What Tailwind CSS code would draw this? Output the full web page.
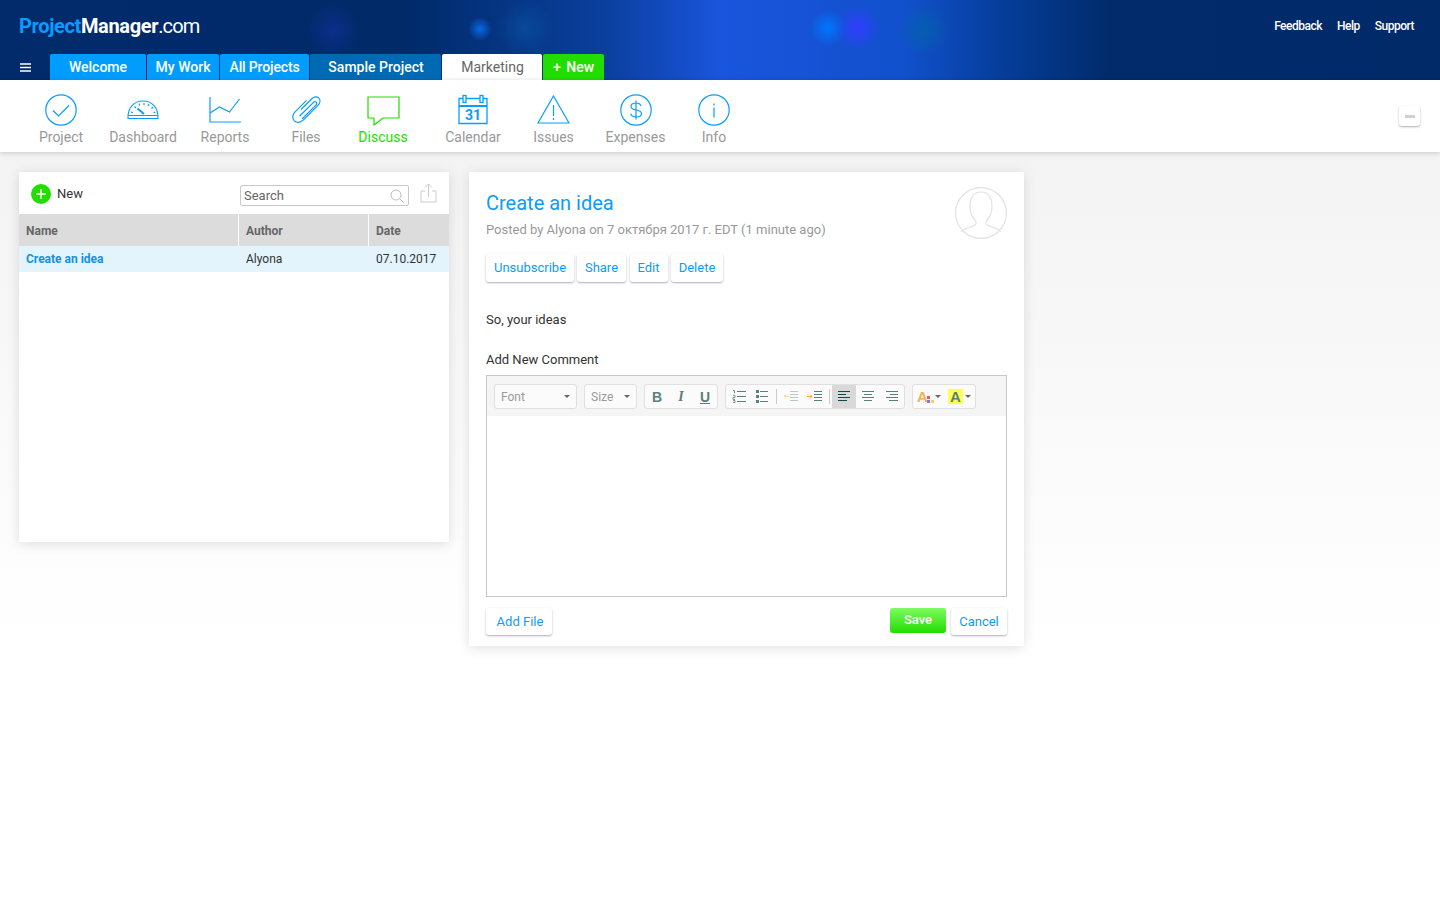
<!DOCTYPE html>
<html lang="en">
<head>
  <meta charset="utf-8" />
  <meta name="viewport" content="width=device-width, initial-scale=1" />
  <title>ProjectManager.com</title>
  <script src="https://cdn.jsdelivr.net/npm/@tailwindcss/browser@4"></script>
</head>
<body class="min-h-[900px] bg-[linear-gradient(180deg,#f3f3f3_0px,#f3f3f3_150px,#ffffff_640px)] font-['Roboto',sans-serif] text-[#333]">

  <!-- Top bar -->
  <header class="relative h-20 overflow-hidden bg-[linear-gradient(90deg,#012b6b_0%,#002a68_28%,#0a3f9d_42%,#1a55dd_50%,#1150cc_63%,#063f9e_69%,#012b6b_77%,#002a68_100%)]">
    <!-- glows -->
    <div class="absolute left-[305px] top-[2px] h-14 w-14 rounded-full bg-[radial-gradient(circle,rgba(30,50,190,.4),rgba(30,50,190,0)_70%)]"></div>
    <div class="absolute left-[468px] top-[17px] h-6 w-6 rounded-full bg-[radial-gradient(circle,rgba(10,110,240,.9),rgba(10,110,240,0)_70%)]"></div>
    <div class="absolute left-[495px] top-0 h-14 w-[60px] rounded-full bg-[radial-gradient(circle,rgba(10,90,170,.5),rgba(10,90,170,0)_70%)]"></div>
    <div class="absolute left-[810px] top-[10px] h-9 w-9 rounded-full bg-[radial-gradient(circle,rgba(0,120,255,.95),rgba(0,120,255,0)_72%)]"></div>
    <div class="absolute left-[836px] top-[6px] h-11 w-11 rounded-full bg-[radial-gradient(circle,rgba(50,60,255,.95),rgba(50,60,255,0)_72%)]"></div>
    <div class="absolute left-[898px] top-[6px] h-12 w-[52px] rounded-full bg-[radial-gradient(circle,rgba(0,100,170,.75),rgba(0,100,170,0)_75%)]"></div>

    <div class="relative flex h-[54px] items-start justify-between pl-[19px] pr-[26px]">
      <div class="mt-[14px] text-[20px] leading-6 tracking-[-0.35px]"><span class="font-bold text-[#0a9cff]">Project</span><span class="font-bold text-white">Manager</span><span class="tracking-[-0.9px] text-white">.com</span></div>
      <div class="mt-[19px] flex gap-[15px] text-xs font-medium leading-[14px] tracking-[-0.5px] text-white">
        <span>Feedback</span><span>Help</span><span>Support</span>
      </div>
    </div>

    <nav class="relative flex h-[26px] items-stretch text-sm font-medium leading-[26px] text-white">
      <div class="flex w-[50px] items-center pl-[20px]">
        <svg width="11" height="9" viewBox="0 0 11 9" fill="none" stroke="#fff" stroke-width="1.4"><path d="M0 1h11M0 4.5h11M0 8h11"/></svg>
      </div>
      <div class="w-[96px] rounded-t-[2px] bg-[#009dff] text-center">Welcome</div>
      <div class="ml-px w-[72px] rounded-t-[2px] bg-[#009dff] text-center">My Work</div>
      <div class="ml-px w-[89px] rounded-t-[2px] bg-[#009dff] text-center tracking-[-0.15px]">All Projects</div>
      <div class="ml-px w-[131px] rounded-t-[2px] bg-[#0069b4] pl-px text-center">Sample Project</div>
      <div class="ml-px w-[100px] rounded-t-[2px] bg-white pl-px text-center font-normal text-[#666]">Marketing</div>
      <div class="ml-px w-[61px] rounded-t-[2px] bg-[#22dd00] text-center [word-spacing:2px]">+ New</div>
    </nav>
  </header>

  <!-- Section toolbar -->
  <div class="relative flex h-[72px] bg-white pl-5 pr-5 shadow-[0_1px_5px_rgba(0,0,0,.18)]">
    <div class="flex text-sm leading-4 text-[#999]">
      <div class="flex w-[82px] flex-col items-center pt-[14px]">
        <svg width="32" height="32" viewBox="0 0 32 32" fill="none" stroke="#0a9cff" stroke-width="1.2"><circle cx="16" cy="16" r="15.200"/><path d="M8 16.500l5.500 5.500L24 11.500"/></svg>
        <span class="mt-[3px]">Project</span>
      </div>
      <div class="flex w-[82px] flex-col items-center pt-[14px]">
        <svg width="32" height="32" viewBox="0 0 32 32" fill="none" stroke="#0a9cff" stroke-width="1.1"><path d="M1 24.500C.6 13.500 7 7 16 7s15.400 6.500 15 17.500z"/><path d="M1.200 21.500h29.600M4 18l2 .8M7.500 12.500l1.500 1.500M12 9.500l.8 2M17 9v2.200M22 10l-1 2M26 13l-1.500 1.500M28.500 18l-2 .8"/><path d="M10.500 14.500l6.500 5.500" stroke-width="2"/></svg>
        <span class="mt-[3px]">Dashboard</span>
      </div>
      <div class="flex w-[82px] flex-col items-center pt-[14px]">
        <svg width="32" height="32" viewBox="0 0 32 32" fill="none" stroke="#0a9cff" stroke-width="1.2"><path d="M1 3v25h31"/><path d="M1 19l9.500-6 10 5 10-13"/></svg>
        <span class="mt-[3px]">Reports</span>
      </div>
      <div class="flex w-[80px] flex-col items-center pt-[14px]">
        <svg width="32" height="32" viewBox="0 0 32 32" fill="none" stroke="#0a9cff" stroke-width="1.2"><path d="M11 15.500L21.500 5c2.500-2.500 5.500-2.700 7.300-.9s1.600 4.800-.9 7.300L13.500 25.800c-3 3-6.900 3.300-9.200 1s-2-6.200 1-9.200L16.500 6.400"/><path d="M9.500 22.300l13.800-13.700c1-1 2.300-1.100 3-.4s.6 2-.4 3L12 25"/></svg>
        <span class="mt-[3px]">Files</span>
      </div>
      <div class="flex w-[74px] flex-col items-center pt-[14px] text-[#22dd00]">
        <svg width="33" height="32" viewBox="0 0 33 32" fill="none" stroke="#22dd00" stroke-width="1.2"><path d="M1 3h31v21H16l-9 7v-7H1z"/></svg>
        <span class="mt-[3px]">Discuss</span>
      </div>
      <div class="flex w-[106px] flex-col items-center pt-[14px]">
        <svg width="30" height="32" viewBox="0 0 30 32" fill="none" stroke="#0a9cff" stroke-width="1.300"><path d="M1 4.500h28v25H1z"/><path d="M1 12h28" stroke-width="2"/><rect x="5" y="1.500" width="3" height="7" fill="#fff"/><rect x="22" y="1.500" width="3" height="7" fill="#fff"/><text x="15" y="26" text-anchor="middle" font-family="Roboto, sans-serif" font-size="14" font-weight="700" fill="#0a9cff" stroke="none">31</text></svg>
        <span class="mt-[3px]">Calendar</span>
      </div>
      <div class="flex w-[55px] flex-col items-center pt-[14px]">
        <svg width="33" height="32" viewBox="0 0 33 32" fill="none" stroke="#0a9cff" stroke-width="1.2"><path d="M16.500 2L32 29H1z"/><path d="M16.500 11v11M16.500 24v2"/></svg>
        <span class="mt-[3px]">Issues</span>
      </div>
      <div class="flex w-[109px] flex-col items-center pt-[14px]">
        <svg width="32" height="32" viewBox="0 0 32 32" fill="none" stroke="#0a9cff" stroke-width="1.200"><circle cx="16" cy="16" r="15.200"/><path d="M21 12c-.5-1.800-2.300-3-5-3-2.800 0-5 1.400-5 3.500 0 5 10.500 2 10.500 7 0 2.200-2.300 3.500-5.300 3.500s-5-1.300-5.500-3.300M16 6.500v19"/></svg>
        <span class="mt-[3px]">Expenses</span>
      </div>
      <div class="flex w-[48px] flex-col items-center pt-[14px]">
        <svg width="32" height="32" viewBox="0 0 32 32" fill="none" stroke="#0a9cff" stroke-width="1.200"><circle cx="16" cy="16" r="15.200"/><path d="M16 13.500v10M16 9.500v2"/></svg>
        <span class="mt-[3px]">Info</span>
      </div>
    </div>
    <div class="ml-auto mt-[26px] flex h-5 w-[21px] items-center justify-center rounded-[3px] bg-white shadow-[0_1px_2px_rgba(70,70,120,.45)]">
      <div class="h-[3px] w-[10px] bg-[#d0d0d0]"></div>
    </div>
  </div>

  <!-- Content -->
  <main class="flex items-start gap-5 pl-[19px] pt-5">

    <!-- Discussion list -->
    <section class="h-[370px] w-[430px] bg-white shadow-[0_2px_12px_rgba(0,0,0,.12)]">
      <div class="flex h-[42px] items-center pl-3">
        <svg class="mt-[2px]" width="20" height="20" viewBox="0 0 20 20"><circle cx="10" cy="10" r="10" fill="#22dd00"/><path d="M10 5v10M5 10h10" stroke="#fff" stroke-width="1.500"/></svg>
        <span class="ml-[6px] mt-[2px] text-[13px] text-[#333]">New</span>
        <div class="ml-auto mt-[5px] flex h-[21px] w-[169px] items-center justify-between rounded-[2px] border border-[#c8c8c8] pl-[3px] pr-[4px] text-[13px] text-[#666]">
          <span>Search</span>
          <svg width="14" height="14" viewBox="0 0 14 14" fill="none" stroke="#bbb"><circle cx="6" cy="6" r="5"/><path d="M9.700 9.700L13.500 13.500"/></svg>
        </div>
        <svg class="ml-[11px] mr-3" width="17" height="20" viewBox="0 0 17 20" fill="none" stroke="#ccc"><path d="M5 8H1v11h15V8h-4M8.500 14V1M5 4.500L8.500 1 12 4.500"/></svg>
      </div>
      <div class="flex h-8 bg-[#dcdcdc] text-xs font-bold leading-[34px] text-[#666]">
        <div class="w-[220px] border-r border-white pl-[7px]">Name</div>
        <div class="w-[130px] border-r border-white pl-[7px]">Author</div>
        <div class="pl-[7px]">Date</div>
      </div>
      <div class="flex h-[26px] bg-[#e3f4fd] text-xs leading-[26px] text-[#333]">
        <div class="w-[220px] pl-[7px] font-bold text-[#1490e6]">Create an idea</div>
        <div class="w-[130px] pl-[7px]">Alyona</div>
        <div class="pl-[7px]">07.10.2017</div>
      </div>
    </section>

    <!-- Discussion detail -->
    <section class="relative h-[474px] w-[555px] bg-white px-[17px] shadow-[0_2px_12px_rgba(0,0,0,.12)]">
      <svg class="absolute right-[17px] top-[15px]" width="52" height="52" viewBox="0 0 52 52" fill="none" stroke="#e2e2e2" stroke-width="1.200"><circle cx="26" cy="26" r="25.400"/><path d="M6 45c3-4 11-5 14-7 1.500-1 1.500-3 0-5-3-3-5-7-5-13 0-10 4-15 11-15s11 5 11 15c0 6-2 10-5 13-1.500 2-1.500 4 0 5 3 2 11 3 14 7"/></svg>
      <h1 class="pt-[17px] text-[20px] leading-[28px] text-[#0a9cff]">Create an idea</h1>
      <p class="mt-[3px] text-[13px] leading-[20px] text-[#999]">Posted by Alyona on 7 октября 2017 г. EDT (1 minute ago)</p>
      <div class="mt-[14px] flex text-[13px] leading-7 text-[#0a9cff]">
        <button class="h-7 w-[88px] rounded-[3px] bg-white shadow-[0_1px_2px_rgba(70,70,120,.45)]">Unsubscribe</button>
        <button class="ml-[3px] h-7 w-[49px] rounded-[3px] bg-white shadow-[0_1px_2px_rgba(70,70,120,.45)]">Share</button>
        <button class="ml-1 h-7 w-[38px] rounded-[3px] bg-white pr-px shadow-[0_1px_2px_rgba(70,70,120,.45)]">Edit</button>
        <button class="ml-[3px] h-7 w-[52px] rounded-[3px] bg-white shadow-[0_1px_2px_rgba(70,70,120,.45)]">Delete</button>
      </div>
      <p class="mt-[28px] text-[13px] leading-[20px] text-[#333]">So, your ideas</p>
      <p class="mt-[20px] text-[13px] leading-[20px] text-[#333]">Add New Comment</p>

      <!-- Editor -->
      <div class="mt-[5px] h-[222px] border border-[#c8c8c8]">
        <div class="flex h-10 bg-[#f5f5f5] pl-[7px] pt-2 text-xs text-[#999]">
          <div class="flex h-[25px] w-[83px] items-center justify-between rounded-[3px] border border-[#e0e0e0] bg-white/60 pl-[6px] pr-[6px]">
            <span>Font</span><span class="h-0 w-0 border-x-[3px] border-t-[3px] border-x-transparent border-t-[#666]"></span>
          </div>
          <div class="ml-[7px] flex h-[25px] w-[53px] items-center justify-between rounded-[3px] border border-[#e0e0e0] bg-white/60 pl-[6px] pr-[6px]">
            <span>Size</span><span class="h-0 w-0 border-x-[3px] border-t-[3px] border-x-transparent border-t-[#666]"></span>
          </div>
          <div class="ml-[7px] flex h-[25px] w-[74px] items-center rounded-[3px] border border-[#e0e0e0] bg-white/60 text-[14px] leading-none text-[#5a7f7c]">
            <span class="w-6 text-center font-['Liberation_Sans',sans-serif] font-bold">B</span>
            <span class="w-6 text-center font-['Liberation_Serif',serif] font-bold italic">I</span>
            <span class="w-6 text-center font-['Liberation_Sans',sans-serif] font-bold underline">U</span>
          </div>
          <div class="ml-[7px] flex h-[25px] w-[180px] items-center rounded-[3px] border border-[#e0e0e0] bg-white/60">
            <svg class="ml-[6px]" width="14" height="13" viewBox="0 0 14 13" stroke="#5a7f7c"><path d="M5 1.500h9M5 6.500h9M5 11.500h9"/><path d="M1 .5h1.500v3M1 5.500h2v2H1v2h2M1 10.500h2v2H1" fill="none" stroke-width=".8"/></svg>
            <svg class="ml-[10px]" width="12" height="13" viewBox="0 0 12 13" stroke="#5a7f7c"><path d="M4 1.500h8M4 6.500h8M4 11.500h8"/><path d="M0 1.500h3M0 6.500h3M0 11.500h3" stroke-width="3"/></svg>
            <div class="ml-[8px] h-[15px] w-px bg-[#ccc]"></div>
            <svg class="ml-[7px]" width="14" height="13" viewBox="0 0 14 13"><path d="M6 1.500h8M6 4.500h8M6 7.500h8M6 10.500h8" stroke="#b7c9c7"/><path d="M0 6.500h5M2 4.500l-2 2 2 2" stroke="#fbd59c" fill="none"/></svg>
            <svg class="ml-[9px]" width="15" height="13" viewBox="0 0 15 13"><path d="M7 1.500h8M7 4.500h8M7 7.500h8M7 10.500h8" stroke="#5a7f7c"/><path d="M0 6.500h5M3 4.500l2 2-2 2" stroke="#f5a742" fill="none"/></svg>
            <div class="ml-[7px] h-[15px] w-px bg-[#ccc]"></div>
            <div class="ml-[2px] flex h-[23px] w-6 items-center justify-center bg-[#d9d9d9]">
              <svg width="12" height="11" viewBox="0 0 12 11" stroke="#0f4a48"><path d="M0 .5h12M0 3.500h8M0 6.500h12M0 9.500h9"/></svg>
            </div>
            <svg class="ml-[6px]" width="12" height="11" viewBox="0 0 12 11" stroke="#5a7f7c"><path d="M0 .5h12M2 3.500h8M0 6.500h12M2 9.500h8"/></svg>
            <svg class="ml-[12px]" width="12" height="11" viewBox="0 0 12 11" stroke="#5a7f7c"><path d="M0 .5h12M4 3.500h8M0 6.500h12M3 9.500h9"/></svg>
          </div>
          <div class="ml-[7px] flex h-[25px] w-[64px] items-center rounded-[3px] border border-[#e0e0e0] bg-white/60 pl-[4px] font-['Liberation_Sans',sans-serif] text-[15px] font-bold">
            <span class="text-[#f5b04c]">A</span>
            <svg class="-ml-[1px] mt-[6px]" width="7" height="7" viewBox="0 0 7 7"><rect width="3" height="3" fill="#ea5a5a"/><rect x="0" y="4" width="3" height="3" fill="#7a7ae0"/><rect x="4" y="4" width="3" height="3" fill="#f2d060"/></svg>
            <span class="ml-[1px] h-0 w-0 border-x-[3px] border-t-[3px] border-x-transparent border-t-[#666]"></span>
            <span class="ml-[7px] flex h-[15px] w-[15px] items-center justify-center bg-[#ffff55] text-[#5a7f7c]">A</span>
            <span class="ml-[2px] h-0 w-0 border-x-[3px] border-t-[3px] border-x-transparent border-t-[#666]"></span>
          </div>
        </div>
      </div>

      <div class="mt-[11px] flex items-start text-[13px] text-[#0a9cff]">
        <button class="h-[27px] w-[66px] rounded-[3px] bg-white pl-[2px] shadow-[0_1px_2px_rgba(70,70,120,.45)]">Add File</button>
        <button class="ml-auto h-[25px] w-[56px] rounded-[3px] bg-[linear-gradient(180deg,#7dfb5e,#22dd00)] pb-px font-medium text-white">Save</button>
        <button class="ml-[5px] h-[27px] w-[56px] rounded-[3px] bg-white shadow-[0_1px_2px_rgba(70,70,120,.45)]">Cancel</button>
      </div>
    </section>
  </main>
</body>
</html>
